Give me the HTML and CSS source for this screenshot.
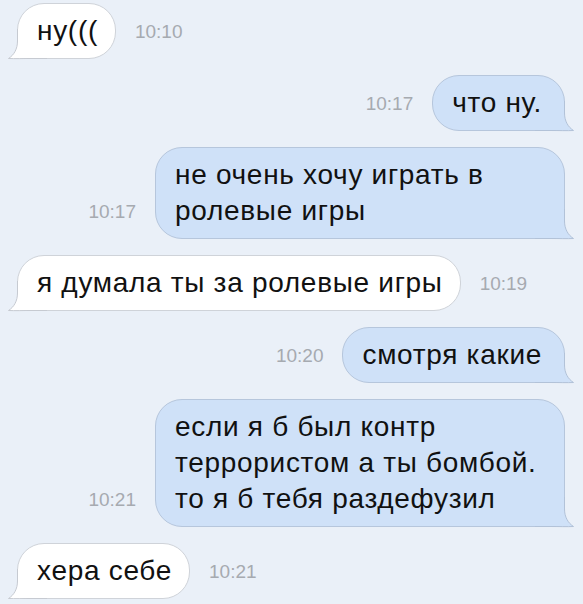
FILE: index.html
```html
<!DOCTYPE html>
<html lang="ru">
<head>
    <meta charset="UTF-8">
    <title>Сообщения</title>
    <link rel="stylesheet" href="styles.css">
</head>
<body>
    <div class="chat">
        <div class="row in">
            <div class="bubble">
                <svg class="tail" width="40" height="30" viewBox="0 0 40 30"><path class="tail-fill" d="M10.5 0 L10.5 12 C10.5 20 7 26 1.5 29.5 C8 29.8 16 29.5 24 29.5 L40 29.5 L40 0 Z"/><path class="tail-line" d="M10.5 0 L10.5 12 C10.5 20 7 26 1.5 29.5 C8 29.8 16 29.5 24 29.5 L40 29.5"/></svg>
                <span class="text">ну(((</span>
            </div>
            <span class="time">10:10</span>
        </div>

        <div class="row out">
            <span class="time">10:17</span>
            <div class="bubble">
                <svg class="tail" width="40" height="30" viewBox="0 0 40 30"><path class="tail-fill" d="M10.5 0 L10.5 12 C10.5 20 7 26 1.5 29.5 C8 29.8 16 29.5 24 29.5 L40 29.5 L40 0 Z"/><path class="tail-line" d="M10.5 0 L10.5 12 C10.5 20 7 26 1.5 29.5 C8 29.8 16 29.5 24 29.5 L40 29.5"/></svg>
                <span class="text">что ну.</span>
            </div>
        </div>

        <div class="row out">
            <span class="time">10:17</span>
            <div class="bubble wide">
                <svg class="tail" width="40" height="30" viewBox="0 0 40 30"><path class="tail-fill" d="M10.5 0 L10.5 12 C10.5 20 7 26 1.5 29.5 C8 29.8 16 29.5 24 29.5 L40 29.5 L40 0 Z"/><path class="tail-line" d="M10.5 0 L10.5 12 C10.5 20 7 26 1.5 29.5 C8 29.8 16 29.5 24 29.5 L40 29.5"/></svg>
                <span class="text">не очень хочу играть в<br>ролевые игры</span>
            </div>
        </div>

        <div class="row in">
            <div class="bubble">
                <svg class="tail" width="40" height="30" viewBox="0 0 40 30"><path class="tail-fill" d="M10.5 0 L10.5 12 C10.5 20 7 26 1.5 29.5 C8 29.8 16 29.5 24 29.5 L40 29.5 L40 0 Z"/><path class="tail-line" d="M10.5 0 L10.5 12 C10.5 20 7 26 1.5 29.5 C8 29.8 16 29.5 24 29.5 L40 29.5"/></svg>
                <span class="text">я думала ты за ролевые игры</span>
            </div>
            <span class="time">10:19</span>
        </div>

        <div class="row out">
            <span class="time">10:20</span>
            <div class="bubble">
                <svg class="tail" width="40" height="30" viewBox="0 0 40 30"><path class="tail-fill" d="M10.5 0 L10.5 12 C10.5 20 7 26 1.5 29.5 C8 29.8 16 29.5 24 29.5 L40 29.5 L40 0 Z"/><path class="tail-line" d="M10.5 0 L10.5 12 C10.5 20 7 26 1.5 29.5 C8 29.8 16 29.5 24 29.5 L40 29.5"/></svg>
                <span class="text">смотря какие</span>
            </div>
        </div>

        <div class="row out">
            <span class="time">10:21</span>
            <div class="bubble wide">
                <svg class="tail" width="40" height="30" viewBox="0 0 40 30"><path class="tail-fill" d="M10.5 0 L10.5 12 C10.5 20 7 26 1.5 29.5 C8 29.8 16 29.5 24 29.5 L40 29.5 L40 0 Z"/><path class="tail-line" d="M10.5 0 L10.5 12 C10.5 20 7 26 1.5 29.5 C8 29.8 16 29.5 24 29.5 L40 29.5"/></svg>
                <span class="text">если я б был контр<br>террористом а ты бомбой.<br>то я б тебя раздефузил</span>
            </div>
        </div>

        <div class="row in">
            <div class="bubble">
                <svg class="tail" width="40" height="30" viewBox="0 0 40 30"><path class="tail-fill" d="M10.5 0 L10.5 12 C10.5 20 7 26 1.5 29.5 C8 29.8 16 29.5 24 29.5 L40 29.5 L40 0 Z"/><path class="tail-line" d="M10.5 0 L10.5 12 C10.5 20 7 26 1.5 29.5 C8 29.8 16 29.5 24 29.5 L40 29.5"/></svg>
                <span class="text">хера себе</span>
            </div>
            <span class="time">10:21</span>
        </div>
    </div>
</body>
</html>
```

FILE: styles.css
```css
body {
    margin: 0;
    background-color: #eaf0f8;
    font-family: 'Liberation Sans', Arial, sans-serif;
}

.chat {
    display: flex;
    flex-direction: column;
    gap: 16px;
    padding: 3px 18px 0 17px;
}

.row {
    display: flex;
    align-items: flex-end;
    gap: 19px;
}

.row.out {
    justify-content: flex-end;
}

.bubble {
    position: relative;
    padding: 9px 22px 9px 19px;
    border: 1px solid #cfd3d9;
    border-radius: 27px;
    background-color: #ffffff;
    color: #111;
    font-size: 28px;
    letter-spacing: 0.7px;
    line-height: 36px;
    white-space: nowrap;
}

.row.in .bubble {
    padding: 9px 17px 9px 19px;
}

.row.out .bubble {
    background-color: #cfe1f8;
    border-color: #b6c6dc;
}

.bubble.wide {
    width: 410px;
    box-sizing: border-box;
}

.text {
    position: relative;
}

/* tail sits over the bottom corner of the bubble */
.tail {
    display: block;
    position: absolute;
    left: -11px;
    bottom: -1px;
    width: 40px;
    height: 30px;
    overflow: visible;
}

.row.out .tail {
    left: auto;
    right: -11px;
    transform: scaleX(-1);
}

.tail-fill {
    fill: #ffffff;
}

.tail-line {
    fill: none;
    stroke: #c6cad1;
    stroke-width: 1;
}

.row.out .tail-fill {
    fill: #cfe1f8;
}

.row.out .tail-line {
    stroke: #b2c2d8;
}

.time {
    padding-bottom: 16px;
    color: #a6aab0;
    font-size: 19px;
    line-height: 22px;
}
```
